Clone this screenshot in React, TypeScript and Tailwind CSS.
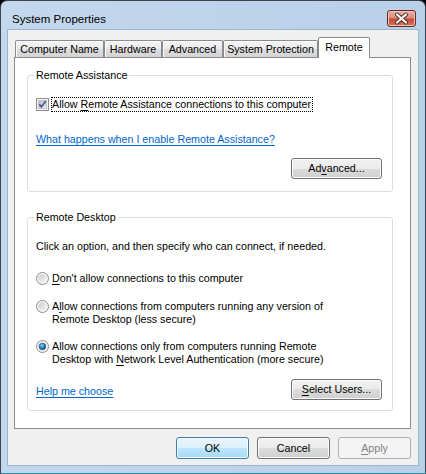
import { useId, type ReactNode } from 'react';

const btnNormal =
    'border-[#707070] text-black bg-[linear-gradient(to_bottom,#f2f2f2_0%,#ebebeb_50%,#dddddd_50%,#cfcfcf_100%)] shadow-[inset_0_0_0_1px_#fbfbfb]';
const btnDefault =
    'border-[#3c7fb1] text-black bg-[linear-gradient(to_bottom,#eaf6fd_0%,#d9f0fc_50%,#bee6fd_50%,#a7d9f5_100%)] shadow-[inset_0_0_0_1px_#f4fbff]';
const btnDisabled = 'border-[#adb2b5] text-[#838383] bg-[#f4f4f4]';

const Button = (props: { children: ReactNode; kind?: 'normal' | 'default' | 'disabled'; className?: string }) => {
    const kind = props.kind ?? 'normal';
    const look = kind === 'default' ? btnDefault : kind === 'disabled' ? btnDisabled : btnNormal;
    return (
        <div className={`flex items-center justify-center rounded-[3px] border leading-[13px] ${look} ${props.className ?? ''}`}>
            {props.children}
        </div>
    );
};

const Key = (props: { children: ReactNode }) => <span className="underline underline-offset-[2px]">{props.children}</span>;

const CheckBox = () => {
    const id = useId();
    return (
        <svg width="13" height="13" viewBox="0 0 13 13" className="shrink-0">
            <defs>
                <linearGradient id={id} x1="0" y1="0" x2="1" y2="1">
                    <stop offset="0" stopColor="#b4b8bd" />
                    <stop offset="1" stopColor="#f2f2f2" />
                </linearGradient>
            </defs>
            <rect x="0.5" y="0.5" width="12" height="12" fill="#f4f4f4" stroke="#8e8f8f" />
            <rect x="2.5" y="2.5" width="8" height="8" fill={`url(#${id})`} stroke="#c4c6c8" />
            <path d="M3.3 6.4 L5.4 8.9 L9.9 3.1" fill="none" stroke="#44598a" strokeWidth="1.7" />
        </svg>
    );
};

const Radio = (props: { checked?: boolean }) => {
    const id = useId();
    return (
        <svg width="13" height="13" viewBox="0 0 13 13" className="shrink-0">
            <defs>
                <linearGradient id={`${id}a`} x1="0" y1="0" x2="1" y2="1">
                    <stop offset="0" stopColor="#c9cbcd" />
                    <stop offset="1" stopColor="#f6f6f6" />
                </linearGradient>
                <radialGradient id={`${id}b`} cx="0.4" cy="0.35" r="0.7">
                    <stop offset="0" stopColor="#8fd6f6" />
                    <stop offset="0.5" stopColor="#2f86c4" />
                    <stop offset="1" stopColor="#14406e" />
                </radialGradient>
            </defs>
            <circle cx="6.5" cy="6.5" r="6" fill="#f4f4f4" stroke="#8e8f8f" />
            <circle cx="6.5" cy="6.5" r="4.2" fill={`url(#${id}a)`} />
            {props.checked && <circle cx="6.5" cy="6.5" r="3.3" fill={`url(#${id}b)`} stroke="#1d4d78" strokeWidth="0.6" />}
        </svg>
    );
};

const Tab = (props: { label: string; width: string; selected?: boolean }) => {
    if (props.selected) {
        return (
            <div
                className={`relative z-10 -mb-[1px] flex h-[21px] items-start justify-center rounded-t-[2px] border border-b-0 border-[#898c95] bg-white pt-[3px] leading-[13px] ${props.width}`}
            >
                {props.label}
            </div>
        );
    }
    return (
        <div
            className={`flex h-[17px] items-center justify-center rounded-t-[2px] border border-b-0 border-[#898c95] bg-[linear-gradient(to_bottom,#f4f4f4_0%,#ebebeb_50%,#dedede_50%,#d4d4d4_100%)] leading-[13px] shadow-[inset_1px_1px_0_#fcfcfc] ${props.width}`}
        >
            {props.label}
        </div>
    );
};

const CloseButton = () => (
    <div className="mt-[9px] h-[17px] w-[29px] rounded-[3px] border border-[#6a2a20] bg-[linear-gradient(to_bottom,#e9b2a8_0%,#d98c80_45%,#c44a37_55%,#d7775f_100%)] shadow-[inset_0_0_0_1px_#eec0b6]">
        <svg width="27" height="15" viewBox="0 0 27 15">
            <path d="M9 3.5 L18 11.5 M18 3.5 L9 11.5" stroke="#4a2a26" strokeWidth="4" strokeLinecap="round" />
            <path d="M9 3.5 L18 11.5 M18 3.5 L9 11.5" stroke="#ffffff" strokeWidth="2.2" strokeLinecap="round" />
        </svg>
    </div>
);

const App = () => {
    return (
        <div className="h-[474px] w-[426px] bg-black font-['Liberation_Sans',Arial,sans-serif] text-[10.7px] text-black">
            <div className="flex h-full flex-col rounded-t-[7px] border border-[#3d4650] border-b-[#1d8fa3] bg-[linear-gradient(to_right,#c3d7ed,#b9d0e9)]">
                <div className="flex h-[28px] shrink-0 items-start justify-between pl-[11px] pr-[9px]">
                    <span className="pt-[11px] text-[11.5px] leading-[14px]">System Properties</span>
                    <CloseButton />
                </div>

                <div className="mx-[6px] mb-[7px] flex flex-1 flex-col border border-[#9fb5cc] bg-[#f0f0f0] pl-[6px] pr-[7px] pt-[7px]">
                    <div className="flex h-[20px] items-end pl-[1px]">
                        <Tab label="Computer Name" width="w-[89px]" />
                        <Tab label="Hardware" width="w-[58px]" />
                        <Tab label="Advanced" width="w-[61px]" />
                        <Tab label="System Protection" width="w-[95px]" />
                        <Tab label="Remote" width="w-[52px]" selected />
                    </div>

                    <div className="flex h-[372px] flex-col border border-[#898c95] bg-white pl-[12px] pr-[17px] pt-[11px] leading-[13px]">
                        <fieldset className="rounded-[3px] border border-[#d5dfe5] pb-[12px] pl-[8px] pr-[10px]">
                            <legend className="-ml-[2px] px-[2px] leading-[13px]">Remote Assistance</legend>
                            <div className="mt-[15px] flex items-center">
                                <CheckBox />
                                <span className="ml-[2px] border border-dotted border-black pr-[1px] leading-[13px]">
                                    Allow <Key>R</Key>emote Assistance connections to this computer
                                </span>
                            </div>
                            <div className="mt-[21px] text-[#0066cc] underline underline-offset-[2px]">
                                What happens when I enable Remote Assistance?
                            </div>
                            <div className="mt-[12px] flex justify-end">
                                <Button className="h-[21px] w-[91px]">
                                    Ad<Key>v</Key>anced...
                                </Button>
                            </div>
                        </fieldset>

                        <fieldset className="mt-[19px] rounded-[3px] border border-[#d5dfe5] pb-[10px] pl-[8px] pr-[10px]">
                            <legend className="-ml-[2px] px-[2px] leading-[13px]">Remote Desktop</legend>
                            <div className="mt-[16px]">Click an option, and then specify who can connect, if needed.</div>
                            <div className="mt-[19px] flex items-start gap-[3px]">
                                <Radio />
                                <span>
                                    <Key>D</Key>on't allow connections to this computer
                                </span>
                            </div>
                            <div className="mt-[15px] flex items-start gap-[3px]">
                                <Radio />
                                <span>
                                    A<Key>l</Key>low connections from computers running any version of
                                    <br />
                                    Remote Desktop (less secure)
                                </span>
                            </div>
                            <div className="mt-[14px] flex items-start gap-[3px]">
                                <Radio checked />
                                <span>
                                    Allow connections only from computers running Remote
                                    <br />
                                    Desktop with <Key>N</Key>etwork Level Authentication (more secure)
                                </span>
                            </div>
                            <div className="mt-[13px] flex items-start justify-between">
                                <span className="pt-[6px] text-[#0066cc] underline underline-offset-[2px]">Help me choose</span>
                                <Button className="h-[21px] w-[91px]">
                                    <Key>S</Key>elect Users...
                                </Button>
                            </div>
                        </fieldset>
                    </div>

                    <div className="mt-[8px] flex justify-end gap-[8px]">
                        <Button kind="default" className="h-[22px] w-[73px]">
                            OK
                        </Button>
                        <Button className="h-[22px] w-[73px]">Cancel</Button>
                        <Button kind="disabled" className="h-[22px] w-[73px]">
                            <Key>A</Key>pply
                        </Button>
                    </div>
                </div>
            </div>
        </div>
    );
};

export default App;
